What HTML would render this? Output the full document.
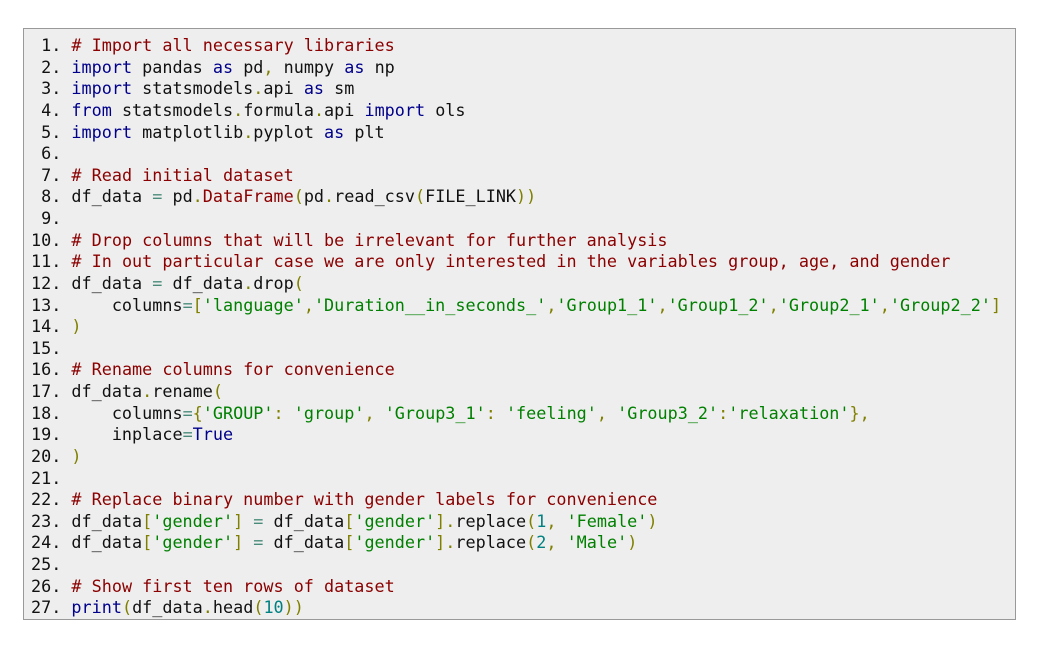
<!DOCTYPE html>
<html><head><meta charset="utf-8"><style>
html,body{margin:0;padding:0;background:#fff;width:1045px;height:647px;overflow:hidden}
.box{position:absolute;left:23px;top:28px;width:993px;height:592px;background:#eeeeee;border:1px solid #999;box-sizing:border-box}
pre{position:absolute;left:31px;top:35px;margin:0;font-family:"DejaVu Sans Mono","Liberation Mono",monospace;font-size:16.8px;line-height:21.62px;color:#111}
.c{color:#8b0000}.k{color:#00008b}.s{color:#008000}.p{color:#808000}.n{color:#008080}.o{color:#4a8a7a}.f{color:#8b0000}
</style></head><body><div class="box"></div><pre> 1. <span class="c"># Import all necessary libraries</span>
 2. <span class="k">import</span> pandas <span class="k">as</span> pd<span class="p">,</span> numpy <span class="k">as</span> np
 3. <span class="k">import</span> statsmodels<span class="p">.</span>api <span class="k">as</span> sm
 4. <span class="k">from</span> statsmodels<span class="p">.</span>formula<span class="p">.</span>api <span class="k">import</span> ols
 5. <span class="k">import</span> matplotlib<span class="p">.</span>pyplot <span class="k">as</span> plt
 6. 
 7. <span class="c"># Read initial dataset</span>
 8. df_data <span class="o">=</span> pd<span class="p">.</span><span class="f">DataFrame</span><span class="p">(</span>pd<span class="p">.</span>read_csv<span class="p">(</span>FILE_LINK<span class="p">))</span>
 9. 
10. <span class="c"># Drop columns that will be irrelevant for further analysis</span>
11. <span class="c"># In out particular case we are only interested in the variables group, age, and gender</span>
12. df_data <span class="o">=</span> df_data<span class="p">.</span>drop<span class="p">(</span>
13.     columns<span class="o">=</span><span class="p">[</span><span class="s">'language'</span><span class="p">,</span><span class="s">'Duration__in_seconds_'</span><span class="p">,</span><span class="s">'Group1_1'</span><span class="p">,</span><span class="s">'Group1_2'</span><span class="p">,</span><span class="s">'Group2_1'</span><span class="p">,</span><span class="s">'Group2_2'</span><span class="p">]</span>
14. <span class="p">)</span>
15. 
16. <span class="c"># Rename columns for convenience</span>
17. df_data<span class="p">.</span>rename<span class="p">(</span>
18.     columns<span class="o">=</span><span class="p">{</span><span class="s">'GROUP'</span><span class="p">:</span> <span class="s">'group'</span><span class="p">,</span> <span class="s">'Group3_1'</span><span class="p">:</span> <span class="s">'feeling'</span><span class="p">,</span> <span class="s">'Group3_2'</span><span class="p">:</span><span class="s">'relaxation'</span><span class="p">},</span>
19.     inplace<span class="o">=</span><span class="k">True</span>
20. <span class="p">)</span>
21. 
22. <span class="c"># Replace binary number with gender labels for convenience</span>
23. df_data<span class="p">[</span><span class="s">'gender'</span><span class="p">]</span> <span class="o">=</span> df_data<span class="p">[</span><span class="s">'gender'</span><span class="p">].</span>replace<span class="p">(</span><span class="n">1</span><span class="p">,</span> <span class="s">'Female'</span><span class="p">)</span>
24. df_data<span class="p">[</span><span class="s">'gender'</span><span class="p">]</span> <span class="o">=</span> df_data<span class="p">[</span><span class="s">'gender'</span><span class="p">].</span>replace<span class="p">(</span><span class="n">2</span><span class="p">,</span> <span class="s">'Male'</span><span class="p">)</span>
25. 
26. <span class="c"># Show first ten rows of dataset</span>
27. <span class="k">print</span><span class="p">(</span>df_data<span class="p">.</span>head<span class="p">(</span><span class="n">10</span><span class="p">))</span></pre></body></html>
